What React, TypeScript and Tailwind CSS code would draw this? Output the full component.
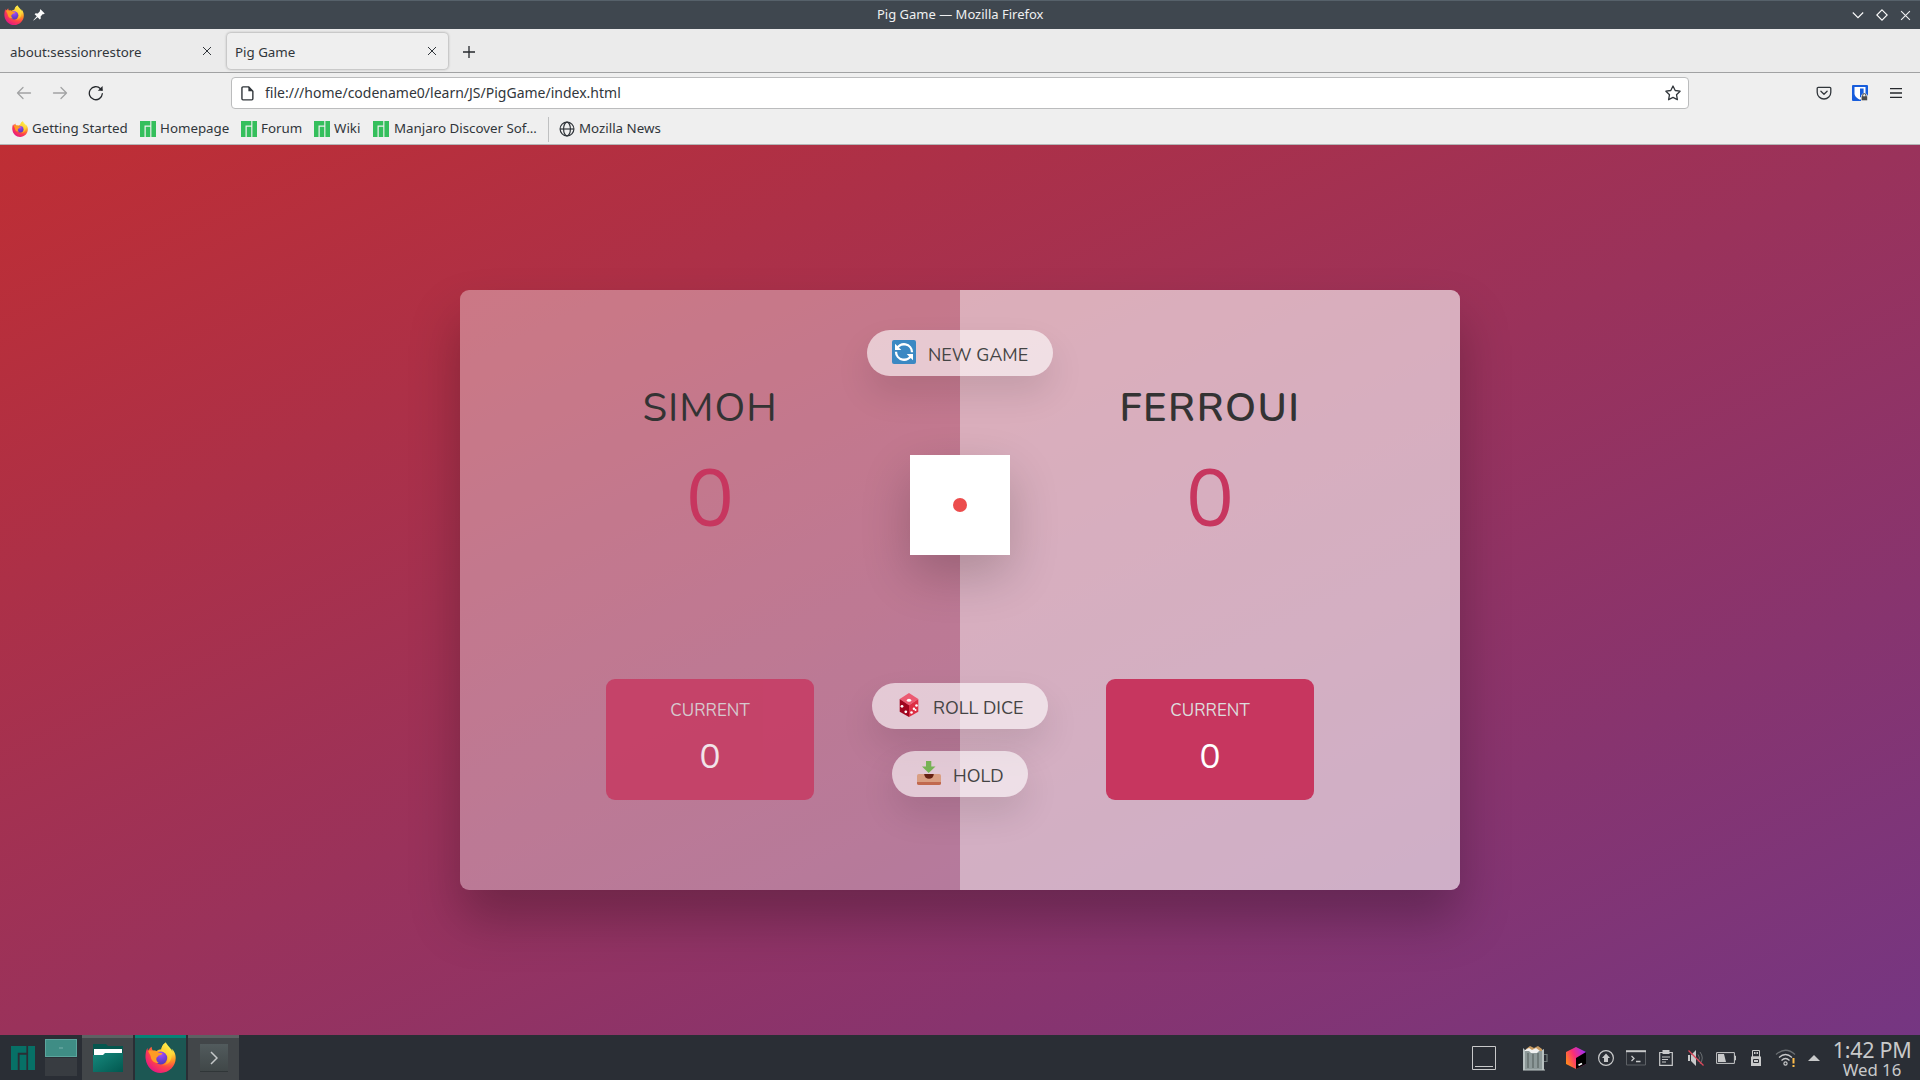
import React from "react";

type IconProps = { className?: string };

const Firefox = ({ className = "" }: IconProps) => (
  <svg viewBox="0 0 32 32" className={className}>
    <defs>
      <radialGradient id="ffBody" cx="0.8" cy="0.12" r="1">
        <stop offset="0" stopColor="#fff44f" />
        <stop offset="0.28" stopColor="#ffd53a" />
        <stop offset="0.48" stopColor="#ff9424" />
        <stop offset="0.7" stopColor="#ff4449" />
        <stop offset="1" stopColor="#e31587" />
      </radialGradient>
      <linearGradient id="ffFlame" x1="0.8" y1="0" x2="0.4" y2="1">
        <stop offset="0" stopColor="#fff44f" />
        <stop offset="0.6" stopColor="#ffcb30" />
        <stop offset="1" stopColor="#ff8a1e" />
      </linearGradient>
      <radialGradient id="ffCore" cx="0.5" cy="0.2" r="0.9">
        <stop offset="0" stopColor="#a84bff" />
        <stop offset="0.5" stopColor="#7540d6" />
        <stop offset="1" stopColor="#4a3bb0" />
      </radialGradient>
    </defs>
    <path fill="url(#ffBody)" d="M30.6 11c-.7-1.700-2.100-3.500-3.200-4.100.6 1.200 1 2.300 1.100 3.200C27 6.300 24 4.600 22 1.200 21.300 0 21 .2 20.800 1c-2.900 2-3.800 4.800-3.900 6.600-2 .1-3.500.7-4.900 1.700-2.200-.6-3.800-.3-3.900-.4C7 7.700 6.800 6 7 5 5.300 6 4 7.500 3.200 9c-.7-.7-.6-2.400-.5-3C1 8 .2 13.500.7 17.500 1.700 25.800 8.300 32 16.200 32 25 32 31.700 25 31.700 16.600c0-2-.4-4.200-1.100-5.600z" />
    <path fill="url(#ffFlame)" d="M20.800 1c-3 2-4 5-3.900 7 3.300.5 6.200 3.500 6.200 8.500 0 4-2 6.500-5.300 7.500 5.500 0 9.200-4 9.500-9 .2-4.500-1.300-6.500-3.300-9C22.600 4.500 21 3 20.800 1z" />
    <circle cx="16.300" cy="16.500" r="6.600" fill="url(#ffCore)" />
    <path fill="#ff9a25" d="M3.200 9C4.500 8 6.500 8.400 8 9c1.500-.3 3 0 4.200.6 1.500 1.600 3.500 1.800 5.800 2-.3 1.600-2 2-4 2.300-.4 1.300-1.800 1.500-2.200 2.500-.5 1.800.4 4 2.500 5.200-4.500.5-8-2.600-8.300-6.200C5.500 13 4 11.500 3.200 9z" />
  </svg>
);

const Manjaro = ({ className = "" }: IconProps) => (
  <svg viewBox="0 0 16 16" className={className} fill="currentColor">
    <path d="M0 0v16h4.500V4.500h5.750V0zM5.750 5.750V16h4.500V5.750zM11.400 0v16H16V0z" />
  </svg>
);

const Cross = ({ className = "" }: IconProps) => (
  <svg viewBox="0 0 10 10" className={className} fill="none" stroke="currentColor" strokeWidth="1">
    <path d="M1 1l8 8M9 1L1 9" />
  </svg>
);

const Arrow = ({ className = "" }: IconProps) => (
  <svg viewBox="0 0 16 16" className={className} fill="none" stroke="#a2a3a4" strokeWidth="1.300" strokeLinecap="round" strokeLinejoin="round">
    <path d="M14.500 8H1.500M7 2.500L1.500 8 7 13.500" />
  </svg>
);

function TitleBar() {
  return (
    <div className="flex h-[29px] items-center border-t border-[#56616a] bg-[#3f474f] text-[#eff0f1]">
      <Firefox className="ml-1 h-5 w-5" />
      <svg viewBox="0 0 12 12" className="ml-[9px] h-3 w-3" fill="#fcfcfc">
        <path d="M7.500.3l4.200 4.200-1 .8-.8-.2-2.300 2.300.2 2-1 1L4.600 8.200.7 11.600l-.4-.4 3.500-3.900L1.600 5.200l1-1 2.200.2 2.300-2.300-.3-1z" />
      </svg>
      <span className="w-[1807px] pb-[2px] pl-[832px] text-[13px] leading-[20px] whitespace-nowrap">Pig Game — Mozilla Firefox</span>
      <div className="flex items-center gap-3">
        <svg viewBox="0 0 12 12" className="h-3 w-3" fill="none" stroke="#fcfcfc" strokeWidth="1.100"><path d="M.8 3.500L6 8.700l5.200-5.200" /></svg>
        <svg viewBox="0 0 12 12" className="h-3 w-3" fill="none" stroke="#fcfcfc" strokeWidth="1.100"><path d="M6 .8L11.200 6 6 11.200.8 6z" /></svg>
        <Cross className="h-[11px] w-[11px]" />
      </div>
    </div>
  );
}

function TabBar() {
  return (
    <div className="flex h-[44px] items-start border-b border-[#a1a2a3] bg-[#ebebeb] pt-1 text-[13.330px] text-[#31363b]">
      <div className="flex h-[36px] w-[227px] items-center pl-[10px]">
        <span className="w-[192px] pt-1">about:sessionrestore</span>
        <Cross className="h-[10px] w-[10px]" />
      </div>
      <div className="flex h-[36px] w-[221px] items-center rounded bg-[#efefef] pl-2 shadow-[0_0_3px_rgba(0,0,0,0.4)]">
        <span className="w-[192px] pt-1">Pig Game</span>
        <Cross className="h-[10px] w-[10px]" />
      </div>
      <svg viewBox="0 0 12 12" className="mt-[13px] ml-[15px] h-3 w-3" fill="none" stroke="#26292d" strokeWidth="1.300"><path d="M6 0v12M0 6h12" /></svg>
    </div>
  );
}

function NavBar() {
  return (
    <div className="flex h-[39px] items-center bg-[#efefef] text-[#31363b]">
      <Arrow className="ml-4 h-4 w-4" />
      <Arrow className="ml-5 h-4 w-4 rotate-180" />
      <svg viewBox="0 0 16 16" className="mt-px ml-5 h-4 w-4" fill="none" stroke="#26292d" strokeWidth="1.300" strokeLinecap="round">
        <path d="M14.300 8.700A6.500 6.500 0 1 1 12.500 3.700L14 5" />
        <path d="M14.600 1v4.800H9.800z" fill="#26292d" stroke="none" />
      </svg>
      <div className="mt-px ml-[127px] flex h-[32px] w-[1458px] items-center rounded border border-[#bbbcbd] bg-white">
        <svg viewBox="0 0 14 14" className="ml-[8px] h-[15px] w-[15px] shrink-0" fill="none" stroke="#31363b" strokeWidth="1.300" strokeLinejoin="round">
          <path d="M2.800.8H8l4 4v7.100a1 1 0 0 1-1 1H2.800a1 1 0 0 1-1-1V1.800a1 1 0 0 1 1-1z" />
          <path d="M7.800.8v4.200H12z" fill="#31363b" stroke="none" />
        </svg>
        <span className="ml-[10px] w-[1400px] shrink-0 pb-px text-[14px] leading-[21px]">file:///home/codename0/learn/JS/PigGame/index.html</span>
        <svg viewBox="0 0 16 16" className="h-4 w-4 shrink-0" fill="none" stroke="#31363b" strokeWidth="1.300" strokeLinejoin="round">
          <path d="M8 1l2.200 4.500 4.900.7-3.600 3.500.9 5L8 12.400 3.600 14.700l.9-5L.9 6.200l4.900-.7z" />
        </svg>
      </div>
      <svg viewBox="0 0 16 16" className="ml-[127px] h-4 w-4" fill="none" stroke="#31363b" strokeWidth="1.300" strokeLinecap="round" strokeLinejoin="round">
        <path d="M2.200 2.300h11.600a1 1 0 0 1 1 1v3.900a6.800 6.800 0 0 1-13.600 0V3.300a1 1 0 0 1 1-1zM4.900 6.300L8 9.200l3.100-2.900" />
      </svg>
      <svg viewBox="0 0 16 16" className="ml-[20px] h-4 w-4">
        <rect width="16" height="16" rx="1" fill="#175ddc" />
        <path d="M2.500 2h11v6.500c0 3-3 5-5.500 6.200C5.500 13.500 2.500 11.500 2.500 8.500z" fill="#fff" />
        <path d="M8 3.500h3.600V8.200C11.500 10 10 11.500 8 12.500z" fill="#175ddc" />
        <path d="M9 16v-5l1.300-2.200h4l1.700 2V16z" fill="#efefef" />
        <path d="M10.700 12v-1.800a1.600 1.600 0 0 1 3.200 0V12" fill="none" stroke="#4a4a4a" />
        <rect x="9.600" y="11.300" width="5.600" height="4" fill="#4a4a4a" />
      </svg>
      <svg viewBox="0 0 12 10" className="ml-[22px] h-[10px] w-3" stroke="#26292d" strokeWidth="1.300"><path d="M0 .6h12M0 5h12M0 9.400h12" /></svg>
    </div>
  );
}

function Bookmarks() {
  return (
    <div className="flex h-[33px] items-center border-b border-[#b4b5b6] bg-[#efefef] pt-[2px] text-[13.330px] whitespace-nowrap text-[#31363b]">
      <div className="ml-3 flex w-32 items-center gap-1">
        <Firefox className="h-4 w-4" />
        <span>Getting Started</span>
      </div>
      <div className="flex w-[101px] items-center gap-1"><Manjaro className="h-4 w-4 text-[#35bf5c]" /><span>Homepage</span></div>
      <div className="flex w-[73px] items-center gap-1"><Manjaro className="h-4 w-4 text-[#35bf5c]" /><span>Forum</span></div>
      <div className="flex w-[59px] items-center gap-1"><Manjaro className="h-4 w-4 text-[#35bf5c]" /><span>Wiki</span></div>
      <div className="flex w-[175px] items-center gap-[5px]"><Manjaro className="h-4 w-4 text-[#35bf5c]" /><span>Manjaro Discover Sof…</span></div>
      <div className="h-[25px] w-px bg-[#bfc0c1]" />
      <svg viewBox="0 0 16 16" className="ml-[10px] h-4 w-4" fill="none" stroke="#31363b" strokeWidth="1.200">
        <circle cx="8" cy="8" r="6.900" />
        <ellipse cx="8" cy="8" rx="3.400" ry="6.900" />
        <path d="M1.100 8h13.800" />
      </svg>
      <span className="ml-1">Mozilla News</span>
    </div>
  );
}

type PlayerProps = { name: string; active: boolean };

function Player({ name, active }: PlayerProps) {
  return (
    <section className={`flex w-1/2 flex-col items-center pt-[91px] ${active ? "bg-white/40" : ""}`}>
      <h2 className={`h-[55px] text-[40px] leading-[55px] text-[#333] ${active ? "font-semibold tracking-[1.500px]" : "font-normal tracking-[1px]"}`}>{name}</h2>
      <p className="mt-[9px] h-[109px] text-[80px] leading-[109px] font-normal text-[#c7365f]">0</p>
      <div className={`mt-[125px] flex h-[121px] w-[208px] flex-col items-center rounded-[9px] bg-[#c7365f] ${active ? "" : "opacity-80"}`}>
        <p className="mt-[20px] h-[23px] text-[17px] leading-[23px] font-normal text-[#ddd]">CURRENT</p>
        <p className="mt-[11px] h-[48px] text-[35px] leading-[48px] font-normal text-white">0</p>
      </div>
    </section>
  );
}

const pill = "absolute left-1/2 flex h-[46px] -translate-x-1/2 items-center rounded-full bg-white/60 text-[18px] font-normal text-[#444] shadow-[0_17.5px_35px_rgba(0,0,0,0.1)] whitespace-nowrap";

const RefreshIcon = () => (
  <svg viewBox="0 0 24 24" className="h-6 w-6 shrink-0">
    <rect width="24" height="24" rx="2" fill="#3b88c3" />
    <path d="M4.500 9.500A8 8 0 0 1 20 12.300M19.500 14.500A8 8 0 0 1 4 11.700" fill="none" stroke="#fff" strokeWidth="2.300" />
    <path d="M3 3.700v6.300h6.300zM21 20.300v-6.300h-6.300z" fill="#fff" />
  </svg>
);

const DiceIcon = () => (
  <svg viewBox="0 0 24 24" className="h-6 w-6 shrink-0">
    <path d="M12 0l9.300 6L12 12.300 2.700 6z" fill="#ec5a72" />
    <path d="M2.700 6L12 12.300V24l-9.300-5.300z" fill="#a0041e" />
    <path d="M21.300 6L12 12.300V24l9.300-5.300z" fill="#dd2e44" />
    <g fill="#fff">
      <ellipse cx="12" cy="7.300" rx="2.200" ry="1.500" />
      <circle cx="5" cy="13.300" r="1.400" /><circle cx="8.800" cy="18.800" r="1.400" />
      <circle cx="19.500" cy="12.500" r="1.300" /><circle cx="16.900" cy="15.800" r="1.200" /><circle cx="14.500" cy="19.500" r="1.300" /><circle cx="18.500" cy="17" r="1" />
    </g>
  </svg>
);

const InboxIcon = () => (
  <svg viewBox="0 0 24 24" className="h-6 w-6 shrink-0">
    <rect y="13" width="24" height="11" rx="1.800" fill="#d99e82" />
    <path d="M0 21h24v1.200a1.800 1.800 0 0 1-1.800 1.800H1.800A1.800 1.800 0 0 1 0 22.200z" fill="#c1694f" />
    <path d="M7.200 13h9.600a4.800 4.800 0 0 1-9.600 0z" fill="#662113" />
    <path d="M9 0h5.300v5.500H18.500L11.700 12 5 5.500h4z" fill="#77b255" />
  </svg>
);

function Game() {
  return (
    <div className="flex h-[890px] items-center justify-center bg-[linear-gradient(to_top_left,#753682_0%,#bf2e34_100%)] font-[Nunito,Lato,'Noto_Sans',sans-serif]">
      <main className="relative flex h-[600px] w-[1000px] overflow-visible rounded-[9px] bg-white/35 shadow-[0_30px_50px_rgba(0,0,0,0.25)]">
        <div className="flex w-full overflow-hidden rounded-[9px]">
          <Player name="SIMOH" active={false} />
          <Player name="FERROUI" active />
        </div>
        <div className="absolute top-[165px] left-[450px] flex h-[100px] w-[100px] items-center justify-center bg-white shadow-[0_20px_50px_rgba(0,0,0,0.2)]">
          <div className="h-[14px] w-[14px] rounded-full bg-[#ec4c4c]" />
        </div>
        <button className={`${pill} top-[40px] w-[186px] pl-[25px]`}>
          <span className="-mt-[3px]"><RefreshIcon /></span>
          <span className="ml-3 pt-1">NEW GAME</span>
        </button>
        <button className={`${pill} top-[393px] w-[176px] pl-[25px]`}>
          <span className="-mt-[3px]"><DiceIcon /></span>
          <span className="ml-3 pt-1">ROLL DICE</span>
        </button>
        <button className={`${pill} top-[461px] w-[136px] pl-[25px]`}>
          <span className="-mt-[3px]"><InboxIcon /></span>
          <span className="ml-3 pt-1">HOLD</span>
        </button>
      </main>
    </div>
  );
}

function Tray() {
  return (
    <div className="ml-auto flex h-full items-center text-[#c8c9ca]">
      <svg viewBox="0 0 24 24" className="h-6 w-6" fill="none" stroke="currentColor"><path d="M.5.5h23v23H.5zM3 20.500h18" /></svg>
      <svg viewBox="0 0 26 26" className="ml-[26px] h-[26px] w-[26px]">
        <path d="M4 4l4-3 4 2 4-2 4 3v4H4z" fill="#c79b62" />
        <path d="M3 5l4-2 3 2 4-2 4 3v3H3z" fill="#f1f1f1" />
        <path d="M1 4l2 2h4l2 2h6l2-2h4l1 1v18H1z" fill="#8d9999" />
        <path d="M1 3v22h2V5zM20 5v20h2V4z" fill="#b8c1c1" />
        <path d="M6 8v15M11 9v14M16 8v15" stroke="#66706f" strokeWidth="1.500" />
        <path d="M1 25h22" stroke="#bcc5c5" />
        <path d="M22 9.500h3v7h-3" fill="none" stroke="#6f7a7a" strokeWidth="1.200" />
      </svg>
      <svg viewBox="0 0 20 22" className="ml-[18px] h-[22px] w-5">
        <defs><linearGradient id="tb" x1="0" y1=".7" x2="1" y2=".2"><stop stopColor="#ff8a1a" /><stop offset=".45" stopColor="#fc2f75" /><stop offset="1" stopColor="#9a2fff" /></linearGradient></defs>
        <path d="M10 0l10 5v12l-10 5L0 17V5z" fill="url(#tb)" />
        <path d="M10 11l10-6v12l-10 5z" fill="#000" />
        <path d="M12.500 18.300l3.500-1.900" stroke="#fff" strokeWidth="1.700" />
      </svg>
      <svg viewBox="0 0 16 16" className="ml-[12px] h-4 w-4">
        <circle cx="8" cy="8" r="7.400" fill="none" stroke="currentColor" strokeWidth="1.200" />
        <path d="M8 3.500L12 8h-2v4H6V8H4z" fill="currentColor" />
      </svg>
      <svg viewBox="0 0 20 16" className="ml-[12px] h-4 w-5" fill="none">
        <path d="M.5 2v13h19V2" stroke="#5d6166" /><path d="M0 1.200h20" stroke="currentColor" strokeWidth="2" />
        <path d="M5.500 6L8 8.500 5.500 11M10 11.500h4.500" stroke="currentColor" strokeWidth="1.300" />
      </svg>
      <svg viewBox="0 0 14 16" className="ml-[13px] h-4 w-[14px]" fill="none" stroke="currentColor" strokeWidth="1.200">
        <path d="M.7 2.500h12.600v12.800H.7zM3 7h8M3 9.500h6M3 12h4" /><path d="M3.500 0h7v4h-7z" fill="currentColor" stroke="none" />
      </svg>
      <svg viewBox="0 0 16 16" className="ml-[15px] h-4 w-4">
        <path d="M0 5h2v6H0zM3 5l5-5v16l-5-5z" fill="currentColor" />
        <path d="M10 4.500q3 3.500 0 7M12 2q4.500 6 0 12" fill="none" stroke="#6a6e72" />
        <path d="M.5.500l15 15" stroke="#e0465a" strokeWidth="1.300" />
      </svg>
      <svg viewBox="0 0 20 12" className="ml-[12px] h-3 w-5"><path d="M.6.6h17.800v10.800H.6zM18.500 4h1v4h-1" fill="none" stroke="currentColor" /><path d="M2 2h6l2 8H2z" fill="currentColor" /></svg>
      <svg viewBox="0 0 10 16" className="ml-[15px] h-4 w-[10px]"><path d="M1.500.5h7V7h-7z" fill="none" stroke="currentColor" /><path d="M3 2h1.500v2H3zM5.500 2H7v2H5.500zM0 6.500h10V16H0z" fill="currentColor" /><path d="M2.500 9.500h5v3h-5z" fill="none" stroke="#2a2e34" /></svg>
      <svg viewBox="0 0 22 18" className="ml-[14px] h-[18px] w-[22px]" fill="none" strokeWidth="1.200">
        <path d="M1 5.500Q10.500-3 20 5.500" stroke="#6a6e72" /><path d="M4 8.500q6.500-6 13 0M6.500 11.500q4-4 8 0" stroke="currentColor" /><circle cx="10.500" cy="14.500" r="1.600" stroke="currentColor" /><path d="M18.500 9v5.500M18.500 16v2" stroke="#fdbc4b" strokeWidth="2" />
      </svg>
      <svg viewBox="0 0 12 6" className="ml-[11px] h-[6px] w-3" fill="currentColor"><path d="M0 6l6-6 6 6z" /></svg>
      <div className="ml-[13px] flex w-[78px] flex-col items-center whitespace-nowrap">
        <span className="h-[22px] text-[21.500px] leading-[23px] tracking-[-0.300px]">1:42 PM</span>
        <span className="h-[18px] text-[16.800px] leading-[19px]">Wed 16</span>
      </div>
      <div className="w-[9px]" />
    </div>
  );
}

function TaskBar() {
  return (
    <div className="flex h-[45px] items-start bg-[#2a2e35]">
      <Manjaro className="mt-[11px] ml-[11px] h-6 w-6 text-[#077066]" />
      <div className="mt-1 ml-[10px] flex w-8 flex-col gap-px">
        <div className="flex h-[18px] items-center justify-center border border-[#5ca59d] bg-[#3f8d85]"><div className="h-[2px] w-1 bg-[#5b9f99]" /></div>
        <div className="h-[18px] bg-[#383c41]" />
      </div>
      <div className="ml-[5px] flex h-full w-[51px] justify-center border-t-[3px] border-[#5d6163] bg-[#424649]">
        <svg viewBox="0 0 30 28" className="mt-[6px] h-7 w-[30px]">
          <defs><linearGradient id="fold" x1="0" y1="0" x2="1" y2="1"><stop stopColor="#16897d" /><stop offset="1" stopColor="#02574f" /></linearGradient></defs>
          <path d="M0 0h13l2 2h15v14H0z" fill="#06564e" /><path d="M1 5h28v8H1z" fill="#fff" /><path d="M0 11h10l2-2h18v19H0z" fill="url(#fold)" />
        </svg>
      </div>
      <div className="ml-[2px] flex h-full w-[51px] justify-center border-t-[3px] border-[#078376] bg-[#1c5753]"><Firefox className="mt-[4px] h-[31px] w-[31px]" /></div>
      <div className="ml-[2px] flex h-full w-[51px] justify-center border-t-[3px] border-[#5d6163] bg-[#424649]">
        <div className="mt-[6px] flex h-7 w-7 items-center justify-center border-b border-[#303638] bg-linear-to-b from-[#525b5d] to-[#404748]">
          <svg viewBox="0 0 8 14" className="h-[14px] w-2" fill="none" stroke="#c5c8c9" strokeWidth="1.500"><path d="M1 1l6 6-6 6" /></svg>
        </div>
      </div>
      <Tray />
    </div>
  );
}

export default function App() {
  return (
    <div className="h-[1080px] w-[1920px] overflow-hidden font-['Noto_Sans',sans-serif]">
      <TitleBar />
      <TabBar />
      <NavBar />
      <Bookmarks />
      <Game />
      <TaskBar />
    </div>
  );
}
